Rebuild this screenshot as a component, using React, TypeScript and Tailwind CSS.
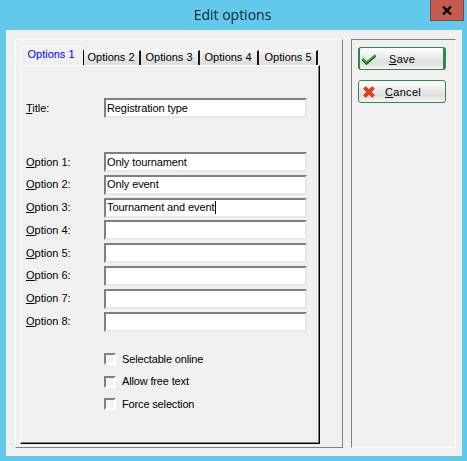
import React from "react";

const font = "font-['Liberation_Sans',sans-serif]";

function Sunken({ text, caret }: { text?: string; caret?: boolean }) {
  return (
    <div className="w-[203px] h-[20px] bg-white border-2 border-t-[#7f7f7f] border-l-[#7f7f7f] border-r-[#e8e8e8] border-b-[#e8e8e8] flex items-center pl-[1px]">
      <span className="text-[11px] text-black leading-none whitespace-nowrap tracking-[-0.1px]">{text}</span>
      {caret && <span className="w-px h-[13px] bg-black ml-[1px]" />}
    </div>
  );
}

function Row({ u, rest, text, caret }: { u: string; rest: string; text?: string; caret?: boolean }) {
  return (
    <div className="flex items-center h-[20px]">
      <div className="w-[78px] text-[11px] text-black whitespace-nowrap leading-none">
        <span className="underline">{u}</span>
        {rest}
      </div>
      <Sunken text={text} caret={caret} />
    </div>
  );
}

function Check({ label }: { label: string }) {
  return (
    <div className="flex items-center h-[13px] gap-[6px]">
      <div className="w-[12px] h-[12px] bg-[#f4f4f4] border-2 border-t-[#808080] border-l-[#808080] border-r-white border-b-white" />
      <span className="text-[11px] text-black leading-none whitespace-nowrap tracking-[-0.15px]">{label}</span>
    </div>
  );
}

function Tab({ label, w, last }: { label: string; w: string; last?: boolean }) {
  return (
    <div
      className={`${w} h-[15px] flex items-center justify-center pb-[2px] ${last ? "pl-[1px]" : "pr-[1px]"} text-[11px] leading-none text-black bg-gradient-to-b from-[#f2f2f2] to-[#dcdcdc] border-t border-t-white border-r-2 border-r-[#1a1a1a]`}
    >
      {label}
    </div>
  );
}

function Btn({ children, label, rest, main }: { children: React.ReactNode; label: string; rest: string; main?: boolean }) {
  return (
    <div
      className={`w-[88px] h-[23px] rounded-[3px] border border-[#2f8a45] bg-gradient-to-b from-white via-[#dedede] via-70% to-[#f6f6f6] flex items-center text-[11px] text-black ${main ? "border-r-[3px] border-l-[2px] pl-[1px]" : "pl-[2px]"}`}
    >
      <span className="w-[16px] h-[14px] flex items-center justify-center">{children}</span>
      <span className={`${main ? "ml-[12px]" : "ml-[8px]"} pt-[1px] tracking-[0.3px] leading-none`}>
        <span className="underline">{label}</span>
        {rest}
      </span>
    </div>
  );
}

export default function App() {
  const labels = ["Only tournament", "Only event", "Tournament and event", "", "", "", "", ""];
  return (
    <div className={`${font} w-[467px] h-[461px] bg-[#63c9ea] flex flex-col overflow-hidden`}>
      <div className="h-[30px] shrink-0 flex items-start">
        <div className="flex-1 text-center pt-[5px] text-[14px] leading-[20px] text-[#0f2a3d] font-['Open_Sans',sans-serif] pl-[35px]">
          Edit options
        </div>
        <div className="w-[34px] h-[21px] mr-[3px] bg-[#c75a50] border border-[#7a4a44] border-t-0 flex items-center justify-center">
          <svg width="10" height="9" viewBox="0 0 10 9">
            <path d="M1 0.5 L9 8.5 M9 0.5 L1 8.5" stroke="#000" strokeWidth="2.4" />
          </svg>
        </div>
      </div>

      <div className="ml-[6px] w-[456px] h-[426px] bg-[#f0f0f0] flex pt-[9px] pl-[9px]">
        <div className="w-[328px] h-[409px] border border-l-white border-t-white border-r-[#808080] border-b-[#808080] pl-[4px] pt-[6px]">
          <div className="flex items-end h-[19px]">
            <div className="w-[63px] h-[19px] rounded-t-[3px] bg-[#f0f0f0] border-l border-l-white border-t border-t-white flex items-center justify-center text-[11px] leading-none text-[#0000ff] pb-[3px] pr-[2px]">
              Options 1
            </div>
            <span className="w-px h-[15px] bg-black" />
            <Tab label="Options 2" w="w-[57px]" />
            <Tab label="Options 3" w="w-[59px]" />
            <Tab label="Options 4" w="w-[59px]" />
            <Tab label="Options 5" w="w-[59px]" last />
          </div>
          <div className="w-[300px] h-[379px] border-l border-l-white border-t border-t-white border-r border-r-black border-b border-b-black pl-[5px] pt-[32px] shadow-[inset_-1px_-1px_0_#808080]">
            <Row u="T" rest="itle:" text="Registration type" />
            <div className="mt-[34px] flex flex-col gap-[2.8px]">
              {labels.map((t, i) => (
                <Row key={i} u="O" rest={`ption ${i + 1}:`} text={t} caret={i === 2} />
              ))}
            </div>
            <div className="ml-[78px] mt-[21px] flex flex-col gap-[9.5px]">
              <Check label="Selectable online" />
              <Check label="Allow free text" />
              <Check label="Force selection" />
            </div>
          </div>
        </div>

        <div className="ml-[8px] w-[105px] h-[409px] border border-l-[#808080] border-t-[#808080] border-r-white border-b-white pl-[6px] pt-[7px] flex flex-col gap-[10px]">
          <Btn label="S" rest="ave" main>
            <svg width="16" height="12" viewBox="0 0 16 12">
              <path d="M1.5 6.8 L5.5 10.8 L14.5 3" fill="none" stroke="#0d5f14" strokeWidth="2" />
              <path d="M1.5 5.5 L5.5 9.5 L14.5 2" fill="none" stroke="#2fa52f" strokeWidth="2" />
            </svg>
          </Btn>
          <Btn label="C" rest="ancel">
            <svg width="14" height="12" viewBox="0 0 14 12">
              <path d="M2.5 1.5 L11.5 10.5 M11.5 1.5 L2.5 10.5" fill="none" stroke="#b8321a" strokeWidth="3.8" />
              <path d="M2.5 1.5 L11.5 10.5 M11.5 1.5 L2.5 10.5" fill="none" stroke="#f23c1a" strokeWidth="2.4" />
            </svg>
          </Btn>
        </div>
      </div>
    </div>
  );
}
